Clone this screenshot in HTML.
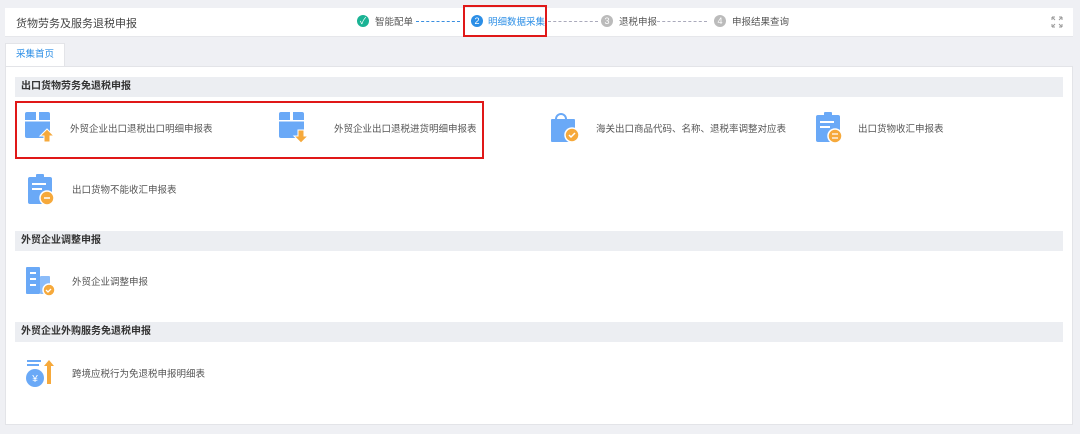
<!DOCTYPE html>
<html><head><meta charset="utf-8"><style>
*{margin:0;padding:0;box-sizing:border-box}
body{width:1080px;height:434px;background:#eff0f4;font-family:"Liberation Sans","Noto Sans CJK SC",sans-serif;position:relative;overflow:hidden;color:#333}
.abs{position:absolute}
.hdr{left:5px;top:8px;width:1068px;height:29px;background:#fff;border-bottom:1px solid #e6e7eb}
.t{font-size:11px;white-space:nowrap}
.sec{left:15px;width:1048px;height:20px;background:#eceef2;font-size:10px;font-weight:bold;padding-left:6px;line-height:20px;color:#333}
.it{font-size:9.5px;color:#555;white-space:nowrap}
.red{border:2px solid #e01818}
.dash{border-top:1px dashed #aab;height:0}
.circ{width:12px;height:12px;border-radius:50%;color:#fff;font-size:9px;text-align:center;line-height:12px}
</style></head><body>
<div class="abs hdr"></div>
<div class="abs t" style="left:16px;top:15px;color:#444">货物劳务及服务退税申报</div>
<div class="abs circ" style="left:357px;top:15px;background:#1ab394">✓</div>
<div class="abs t" style="left:375px;top:14px;font-size:9.5px;color:#555">智能配单</div>
<div class="abs dash" style="left:416px;top:21px;width:44px;border-color:#3a8fe0"></div>
<div class="abs circ" style="left:471px;top:15px;background:#2b8ee6">2</div>
<div class="abs t" style="left:488px;top:14px;font-size:9.5px;color:#2b8ee6">明细数据采集</div>
<div class="abs red" style="left:463px;top:5px;width:84px;height:32px"></div>
<div class="abs dash" style="left:548px;top:21px;width:50px"></div>
<div class="abs circ" style="left:601px;top:15px;background:#bbb">3</div>
<div class="abs t" style="left:619px;top:14px;font-size:9.5px;color:#555">退税申报</div>
<div class="abs dash" style="left:657px;top:21px;width:50px"></div>
<div class="abs circ" style="left:714px;top:15px;background:#bbb">4</div>
<div class="abs t" style="left:732px;top:14px;font-size:9.5px;color:#555">申报结果查询</div>
<svg class="abs" style="left:1051px;top:16px" width="12" height="12"><path d="M1 1h3M1 1v3M1 1l3 3M11 1h-3M11 1v3M11 1l-3 3M1 11h3M1 11v-3M1 11l3-3M11 11h-3M11 11v-3M11 11l-3-3" stroke="#999" stroke-width="1" fill="none"/></svg>

<div class="abs" style="left:5px;top:43px;width:60px;height:24px;background:#fff;border:1px solid #e3e4e8;border-bottom:none;font-size:9.5px;color:#2b8ee6;text-align:center;line-height:22px">采集首页</div>
<div class="abs" style="left:5px;top:66px;width:1068px;height:359px;background:#fff;border:1px solid #e3e4e8"></div>

<div class="abs sec" style="top:77px">出口货物劳务免退税申报</div>
<div class="abs sec" style="top:231px">外贸企业调整申报</div>
<div class="abs sec" style="top:322px">外贸企业外购服务免退税申报</div>

<svg class="abs" style="left:25px;top:112px" width="32" height="32"><rect x="0" y="0" width="25" height="26" rx="2" fill="#6aa9f7"/><rect x="11" y="0" width="3" height="8" fill="#fff"/><rect x="0" y="8" width="25" height="1.5" fill="#fff"/><path d="M22 17l-7 7h4v6h6v-6h4z" fill="#f6a93b" stroke="#fff" stroke-width="1"/></svg>
<div class="abs it" style="left:70px;top:121px">外贸企业出口退税出口明细申报表</div>
<svg class="abs" style="left:279px;top:112px" width="32" height="32"><rect x="0" y="0" width="25" height="26" rx="2" fill="#6aa9f7"/><rect x="11" y="0" width="3" height="8" fill="#fff"/><rect x="0" y="8" width="25" height="1.5" fill="#fff"/><path d="M22 31l-7-7h4v-6h6v6h4z" fill="#f6a93b" stroke="#fff" stroke-width="1"/></svg>
<div class="abs it" style="left:334px;top:121px">外贸企业出口退税进货明细申报表</div>
<div class="abs red" style="left:15px;top:101px;width:469px;height:58px"></div>

<svg class="abs" style="left:550px;top:112px" width="30" height="32"><path d="M6 7a5 5 0 0 1 10 0" fill="none" stroke="#6aa9f7" stroke-width="2"/><rect x="1" y="7" width="24" height="23" rx="1" fill="#6aa9f7"/><circle cx="22" cy="23" r="7" fill="#f6a93b" stroke="#fff" stroke-width="1.5"/><path d="M19 23l2 2 4-4" fill="none" stroke="#fff" stroke-width="1.5"/></svg>
<div class="abs it" style="left:596px;top:121px">海关出口商品代码、名称、退税率调整对应表</div>
<svg class="abs" style="left:815px;top:112px" width="30" height="32"><rect x="1" y="3" width="24" height="27" rx="2" fill="#6aa9f7"/><rect x="9" y="0" width="8" height="5" rx="1" fill="#6aa9f7"/><rect x="5" y="9" width="14" height="2" fill="#fff"/><rect x="5" y="14" width="10" height="2" fill="#fff"/><circle cx="20" cy="24" r="7" fill="#f6a93b" stroke="#fff" stroke-width="1.5"/><path d="M17 22h6M17 26h6" stroke="#fff" stroke-width="1.3"/></svg>
<div class="abs it" style="left:858px;top:121px">出口货物收汇申报表</div>

<svg class="abs" style="left:27px;top:174px" width="30" height="32"><rect x="1" y="3" width="24" height="27" rx="2" fill="#6aa9f7"/><rect x="9" y="0" width="8" height="5" rx="1" fill="#6aa9f7"/><rect x="5" y="9" width="14" height="2" fill="#fff"/><rect x="5" y="14" width="10" height="2" fill="#fff"/><circle cx="20" cy="24" r="7" fill="#f6a93b" stroke="#fff" stroke-width="1.5"/><path d="M17 24h6" stroke="#fff" stroke-width="1.5"/></svg>
<div class="abs it" style="left:72px;top:182px">出口货物不能收汇申报表</div>

<svg class="abs" style="left:25px;top:266px" width="32" height="32"><rect x="1" y="1" width="14" height="27" rx="1" fill="#6aa9f7"/><rect x="15" y="10" width="10" height="18" rx="1" fill="#8bbcf9"/><rect x="5" y="6" width="6" height="2" fill="#fff"/><rect x="5" y="12" width="6" height="2" fill="#fff"/><rect x="5" y="18" width="6" height="2" fill="#fff"/><circle cx="24" cy="24" r="6" fill="#f6a93b" stroke="#fff" stroke-width="1.5"/><path d="M21 24l2 2 3-3" fill="none" stroke="#fff" stroke-width="1.3"/></svg>
<div class="abs it" style="left:72px;top:274px">外贸企业调整申报</div>

<svg class="abs" style="left:25px;top:358px" width="32" height="32"><rect x="2" y="2" width="14" height="2" fill="#6aa9f7"/><rect x="2" y="6" width="12" height="2" fill="#6aa9f7"/><circle cx="10" cy="20" r="9" fill="#6aa9f7"/><text x="10" y="24" font-size="10" fill="#fff" text-anchor="middle" font-family="Liberation Sans">¥</text><path d="M24 2l-5 6h3v18h4V8h3z" fill="#f6a93b"/></svg>
<div class="abs it" style="left:72px;top:366px">跨境应税行为免退税申报明细表</div>
</body></html>
